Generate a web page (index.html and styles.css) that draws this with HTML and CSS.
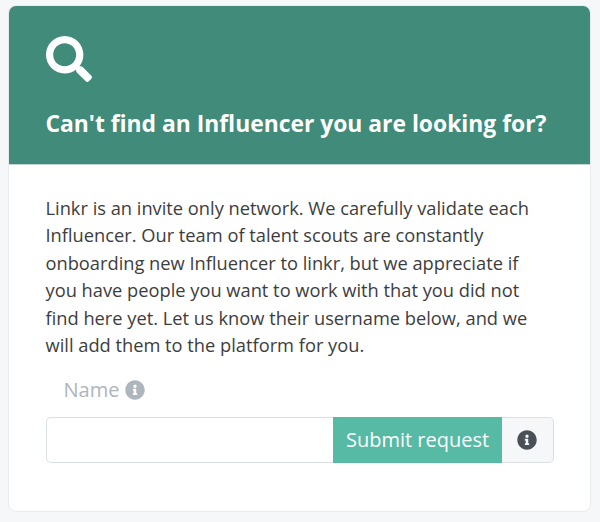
FILE: index.html
```
<!doctype html>
<html lang="en">
<head>
    <meta charset="UTF-8">
    <meta name="viewport" content="width=device-width, initial-scale=1.0">
    <title>Request an Influencer</title>
    <link rel="stylesheet" href="styles.css">
</head>
<body>
<div class="card">
    <div class="card_header">
        <svg class="search_icon" viewBox="0 0 512 512">
            <path d="M505 442.7L405.3 343c-4.5-4.5-10.6-7-17-7H372c27.6-35.3 44-79.7 44-128C416 93.1 322.9 0 208 0S0 93.1 0 208s93.1 208 208 208c48.3 0 92.7-16.4 128-44v16.3c0 6.4 2.5 12.5 7 17l99.7 99.7c9.4 9.4 24.6 9.4 33.9 0l28.3-28.3c9.4-9.4 9.4-24.6.1-34zM208 336c-70.7 0-128-57.2-128-128 0-70.7 57.2-128 128-128 70.7 0 128 57.2 128 128 0 70.7-57.2 128-128 128z"/>
        </svg>
        <h1 class="card_title">Can't find an Influencer you are looking for?</h1>
    </div>
    <div class="card_body">
        <p class="card_text">Linkr is an invite only network. We carefully validate each Influencer. Our team of talent scouts are constantly onboarding new Influencer to linkr, but we appreciate if you have people you want to work with that you did not find here yet. Let us know their username below, and we will add them to the platform for you.</p>
        <label class="field_label" for="name">
            Name
            <svg class="info_icon" viewBox="0 0 512 512">
                <path d="M256 8C119.043 8 8 119.083 8 256c0 136.997 111.043 248 248 248s248-111.003 248-248C504 119.083 392.957 8 256 8zm0 110c23.196 0 42 18.804 42 42s-18.804 42-42 42-42-18.804-42-42 18.804-42 42-42zm56 254c0 6.627-5.373 12-12 12h-88c-6.627 0-12-5.373-12-12v-24c0-6.627 5.373-12 12-12h12v-64h-12c-6.627 0-12-5.373-12-12v-24c0-6.627 5.373-12 12-12h64c6.627 0 12 5.373 12 12v100h12c6.627 0 12 5.373 12 12v24z"/>
            </svg>
        </label>
        <div class="input_group">
            <input class="input_field" id="name" type="text">
            <button class="input_button" type="button">Submit request</button>
            <span class="input_info">
                <svg class="info_icon" viewBox="0 0 512 512">
                    <path d="M256 8C119.043 8 8 119.083 8 256c0 136.997 111.043 248 248 248s248-111.003 248-248C504 119.083 392.957 8 256 8zm0 110c23.196 0 42 18.804 42 42s-18.804 42-42 42-42-18.804-42-42 18.804-42 42-42zm56 254c0 6.627-5.373 12-12 12h-88c-6.627 0-12-5.373-12-12v-24c0-6.627 5.373-12 12-12h12v-64h-12c-6.627 0-12-5.373-12-12v-24c0-6.627 5.373-12 12-12h64c6.627 0 12 5.373 12 12v100h12c6.627 0 12 5.373 12 12v24z"/>
                </svg>
            </span>
        </div>
    </div>
</div>
</body>
</html>
```

FILE: styles.css
```
* {
    box-sizing: border-box;
    margin: 0;
    padding: 0;
}

body {
    padding: 5px 9px 9px 8px;
    background-color: #f6f7f9;
    font-family: "Open Sans", sans-serif;
    color: #3d3d3d;
}

.card {
    height: 507px;
    border: 1px solid #e8ebef;
    border-radius: 8px;
    background-color: #fff;
    overflow: hidden;
}

.card_header {
    height: 159px;
    padding: 30px 36px 0 36.5px;
    border-bottom: 1px solid #c3d6d2;
    background-color: #408b79;
    color: #fff;
}

.search_icon {
    display: block;
    width: 46px;
    height: 46px;
    fill: #fff;
}

.card_title {
    margin-top: 24px;
    font-size: 22.85px;
    font-weight: 700;
    line-height: 36px;
    white-space: nowrap;
}

.card_body {
    padding: 29px 36px 0 36.5px;
}

.card_text {
    padding-right: 8px;
    font-size: 18.27px;
    line-height: 27.4px;
}

.field_label {
    display: flex;
    align-items: center;
    gap: 6px;
    margin-top: 17px;
    padding-left: 18px;
    font-size: 20px;
    line-height: 30px;
    color: #adb5bd;
}

.info_icon {
    width: 20px;
    height: 20px;
    fill: currentColor;
}

.input_group {
    display: flex;
    height: 46px;
    margin-top: 12px;
}

.input_field {
    flex: 1;
    min-width: 0;
    padding: 0 14px;
    border: 1px solid #dbe0e5;
    border-right: 0;
    border-radius: 5px 0 0 5px;
    font: inherit;
    outline: none;
}

.input_button {
    width: 169px;
    padding-bottom: 2px;
    border: 0;
    background-color: #56baa4;
    font-family: inherit;
    font-size: 20px;
    color: #fff;
    white-space: nowrap;
}

.input_info {
    display: flex;
    align-items: center;
    justify-content: center;
    width: 52px;
    padding: 0 2px 1px 0;
    border: 1px solid #dbe0e5;
    border-left: 0;
    border-radius: 0 5px 5px 0;
    background-color: #f6f7f9;
    color: #495057;
}
```
